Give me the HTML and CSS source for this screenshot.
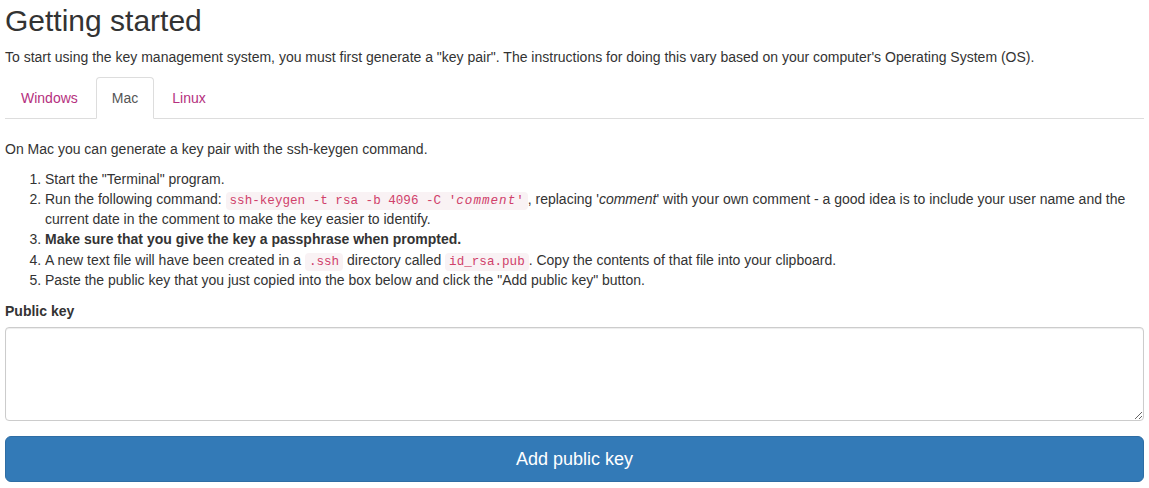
FILE: index.html
```html
<!DOCTYPE html>
<html lang="en">
<head>
<meta charset="utf-8">
<title>Getting started</title>
<link rel="stylesheet" href="styles.css">
</head>
<body>
<div class="page">
  <h2 class="title">Getting started</h2>
  <p>To start using the key management system, you must first generate a "key pair". The instructions for doing this vary based on your computer's Operating System (OS).</p>
  <ul class="nav-tabs">
    <li><a href="#">Windows</a></li>
    <li class="active"><a href="#">Mac</a></li>
    <li><a href="#">Linux</a></li>
  </ul>
  <div class="tab-content">
    <p>On Mac you can generate a key pair with the ssh-keygen command.</p>
    <ol class="steps">
      <li>Start the "Terminal" program.</li>
      <li>Run the following command: <code>ssh-keygen -t rsa -b 4096 -C '<em class="code-em">comment</em>'</code>, replacing '<em>comment</em>' with your own comment - a good idea is to include your user name and the current date in the comment to make the key easier to identify.</li>
      <li><strong>Make sure that you give the key a passphrase when prompted.</strong></li>
      <li class="step-code">A new text file will have been created in a <code>.ssh</code> directory called <code>id_rsa.pub</code>. Copy the contents of that file into your clipboard.</li>
      <li>Paste the public key that you just copied into the box below and click the "Add public key" button.</li>
    </ol>
    <form class="key-form">
      <div class="form-group">
        <label class="label" for="pk">Public key</label>
        <textarea id="pk" class="form-control" rows="4"></textarea>
      </div>
      <button type="button" class="btn-primary">Add public key</button>
    </form>
  </div>
</div>
</body>
</html>
```
FILE: styles.css
```css
* { box-sizing: border-box; }
html, body { margin: 0; padding: 0; background: #fff; }
body {
  font-family: "Liberation Sans", Arial, sans-serif;
  font-size: 14px;
  line-height: 1.42857143;
  color: #333;
}
.page { padding: 4px 5px 0 5px; }
.title {
  font-size: 30px;
  font-weight: 500;
  line-height: 1.1;
  margin: 0 0 10px 0;
}
p { margin: 0 0 10px 0; }
.nav-tabs {
  list-style: none;
  margin: 0;
  padding: 0;
  display: flex;
  border-bottom: 1px solid #ddd;
}
.nav-tabs li { margin-bottom: -1px; }
.nav-tabs a {
  display: block;
  padding: 10px 15px;
  margin-right: 2px;
  line-height: 20px;
  border: 1px solid transparent;
  border-radius: 4px 4px 0 0;
  color: #b5307e;
  text-decoration: none;
}
.nav-tabs li.active a {
  color: #555;
  background: #fff;
  border: 1px solid #ddd;
  border-bottom-color: transparent;
}
.tab-content { padding-top: 20px; }
.steps { margin: 0 0 11px 0; padding-left: 40px; }
.step-code { padding-top: 1px; }
code {
  font-family: "Liberation Mono", "Courier New", monospace;
  font-size: 90%;
  line-height: 1;
  padding: 2px 4px;
  color: #d0406a;
  background-color: #f9f2f4;
  border-radius: 4px;
}
.code-em { letter-spacing: 1px; }
.form-group { margin-bottom: 15px; }
.label {
  display: block;
  font-weight: bold;
  margin-bottom: 6px;
}
.form-control {
  display: block;
  width: 100%;
  padding: 6px 12px;
  font-family: inherit;
  font-size: 14px;
  line-height: 20px;
  color: #555;
  background: #fff;
  border: 1px solid #ccc;
  border-radius: 4px;
  box-shadow: inset 0 1px 1px rgba(0,0,0,.075);
  height: 94px;
  resize: vertical;
}
.btn-primary {
  display: block;
  width: 100%;
  padding: 10px 16px;
  font-family: inherit;
  font-size: 18px;
  line-height: 1.3333333;
  color: #fff;
  background-color: #337ab7;
  border: 1px solid #2e6da4;
  border-radius: 6px;
  text-align: center;
  cursor: pointer;
}
```
